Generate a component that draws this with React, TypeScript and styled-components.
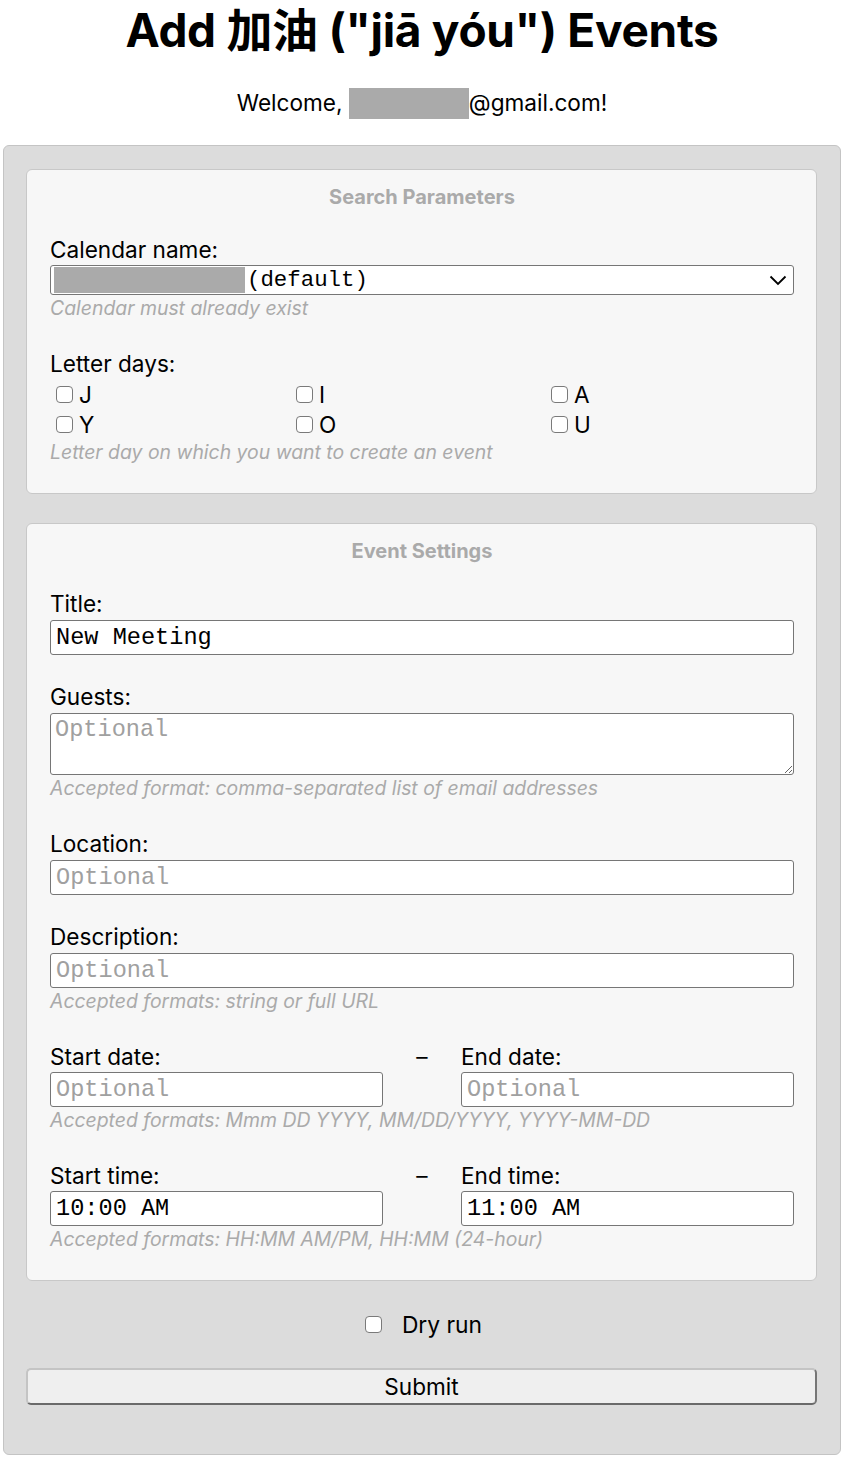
import React from "react";
import styled, { createGlobalStyle } from "styled-components";

const Global = createGlobalStyle`
  html, body { margin: 0; padding: 0; background: #ffffff; }
  body { font-family: Inter, "Noto Sans", "Noto Sans CJK SC", sans-serif; color: #000; }
  * { box-sizing: border-box; }
`;

const Page = styled.div`
  width: 846px;
  padding: 0 5px 4px 3px;
`;

const Title = styled.h1`
  margin: 0;
  padding-top: 4px;
  text-align: center;
  font-size: 46px;
  line-height: 52px;
  font-weight: 700;
  font-family: Inter, "Noto Sans CJK SC", sans-serif;
  letter-spacing: -0.3px;
`;

const Welcome = styled.p`
  margin: 31px 0 26px;
  text-align: center;
  font-size: 22.6px;
  line-height: 32px;
  display: flex;
  justify-content: center;
  align-items: center;
`;

const Redact = styled.span<{ $w: number; $h: number }>`
  display: inline-block;
  width: ${(p) => p.$w}px;
  height: ${(p) => p.$h}px;
  background: #aaaaaa;
`;

const Panel = styled.form`
  background: #dcdcdc;
  border: 1px solid #c4c4c4;
  border-radius: 6px;
  padding: 23px 23px 49px 22px;
  display: flex;
  flex-direction: column;
`;

const Section = styled.div<{ $mb: number }>`
  background: #f7f7f7;
  border: 1px solid #c8c8c8;
  border-radius: 6px;
  padding: 16px 22px 27px 23px;
  margin-bottom: ${(p) => p.$mb}px;
`;

const Legend = styled.div`
  text-align: center;
  font-size: 20px;
  line-height: 22px;
  font-weight: 700;
  color: #aaaaaa;
  margin-bottom: 29px;
`;

const Field = styled.div<{ $last?: boolean }>`
  display: flex;
  flex-direction: column;
  margin-bottom: ${(p) => (p.$last ? 0 : 29)}px;
`;

const Label = styled.label<{ $mb?: number }>`
  font-size: 22.6px;
  line-height: 26px;
  margin-bottom: ${(p) => (p.$mb ?? 3)}px;
`;

const Hint = styled.div`
  font-size: 19.4px;
  line-height: 22px;
  font-style: italic;
  color: #aaaaaa;
  margin-top: 2px;
  padding-bottom: 3px;
`;

const mono = `"Liberation Mono", "Courier New", monospace`;

const TextInput = styled.input`
  height: 35px;
  width: 100%;
  border: 1px solid #767676;
  border-radius: 3px;
  background: #fff;
  padding: 0 5px;
  font-family: ${mono};
  font-size: 23.6px;
  color: #000;
  &::placeholder { color: #a0a0a0; }
`;

const TextArea = styled.textarea`
  height: 62px;
  width: 100%;
  border: 1px solid #767676;
  border-radius: 3px;
  background: #fff;
  padding: 2px 4px;
  font-family: ${mono};
  font-size: 23.6px;
  resize: vertical;
  &::placeholder { color: #a0a0a0; }
`;

const SelectBox = styled.div`
  height: 30px;
  width: 100%;
  border: 1px solid #767676;
  border-radius: 3px;
  background: #fff;
  display: flex;
  align-items: center;
  padding: 0 6px 0 3px;
  margin-top: -1px;
  font-family: ${mono};
  font-size: 22.4px;
`;

const SelectText = styled.span`
  flex: 1;
  display: flex;
  align-items: center;
  gap: 2px;
`;

const Checks = styled.div`
  display: grid;
  grid-template-columns: 240px 255px 1fr;
  padding-left: 6px;
`;

const CheckItem = styled.label`
  display: flex;
  align-items: center;
  height: 30px;
  font-size: 22.6px;
  gap: 6px;
`;

const Box = styled.input.attrs({ type: "checkbox" })`
  appearance: none;
  margin: 0;
  width: 17px;
  height: 17px;
  border: 1px solid #7a7a7a;
  border-radius: 4px;
  background: #fff;
`;

const Pair = styled.div`
  display: grid;
  grid-template-columns: 1fr 78px 1fr;
`;

const Dash = styled.div`
  font-size: 22.6px;
  line-height: 26px;
  text-align: center;
`;

const DryRow = styled.label`
  display: flex;
  justify-content: center;
  align-items: center;
  gap: 20px;
  font-size: 22.8px;
  height: 32px;
  margin: 27px 0 28px;
  padding-left: 4px;
`;

const Submit = styled.button`
  height: 37px;
  width: 100%;
  background: #efefef;
  border: 2px solid;
  border-color: #c4c4c4 #767676 #6a6a6a #c4c4c4;
  border-radius: 5px;
  font-family: Inter, sans-serif;
  font-size: 22.6px;
  color: #000;
  padding: 0;
`;

const Chevron = () => (
  <svg width="18" height="11" viewBox="0 0 18 11">
    <path d="M1.5 1.5 L9 9 L16.5 1.5" fill="none" stroke="#000" strokeWidth="1.8" />
  </svg>
);

export default function App() {
  const letters = ["J", "I", "A", "Y", "O", "U"];
  return (
    <Page>
      <Global />
      <Title>Add 加油 ("jiā yóu") Events</Title>
      <Welcome>
        Welcome,&nbsp;<Redact $w={120} $h={31} />@gmail.com!
      </Welcome>
      <Panel onSubmit={(e) => e.preventDefault()}>
        <Section $mb={29}>
          <Legend>Search Parameters</Legend>
          <Field>
            <Label>Calendar name:</Label>
            <SelectBox>
              <SelectText>
                <Redact $w={191} $h={26} />
                (default)
              </SelectText>
              <Chevron />
            </SelectBox>
            <Hint>Calendar must already exist</Hint>
          </Field>
          <Field $last>
            <Label $mb={2}>Letter days:</Label>
            <Checks>
              {letters.map((l) => (
                <CheckItem key={l}>
                  <Box />
                  {l}
                </CheckItem>
              ))}
            </Checks>
            <Hint>Letter day on which you want to create an event</Hint>
          </Field>
        </Section>
        <Section $mb={0}>
          <Legend>Event Settings</Legend>
          <Field>
            <Label>Title:</Label>
            <TextInput defaultValue="New Meeting" />
          </Field>
          <Field>
            <Label>Guests:</Label>
            <TextArea placeholder="Optional" />
            <Hint>Accepted format: comma-separated list of email addresses</Hint>
          </Field>
          <Field>
            <Label>Location:</Label>
            <TextInput placeholder="Optional" />
          </Field>
          <Field>
            <Label>Description:</Label>
            <TextInput placeholder="Optional" />
            <Hint>Accepted formats: string or full URL</Hint>
          </Field>
          <Field>
            <Pair>
              <Label $mb={2}>Start date:</Label>
              <Dash>–</Dash>
              <Label $mb={2}>End date:</Label>
              <TextInput placeholder="Optional" />
              <div />
              <TextInput placeholder="Optional" />
            </Pair>
            <Hint>Accepted formats: Mmm DD YYYY, MM/DD/YYYY, YYYY-MM-DD</Hint>
          </Field>
          <Field $last>
            <Pair>
              <Label $mb={2}>Start time:</Label>
              <Dash>–</Dash>
              <Label $mb={2}>End time:</Label>
              <TextInput defaultValue="10:00 AM" />
              <div />
              <TextInput defaultValue="11:00 AM" />
            </Pair>
            <Hint>Accepted formats: HH:MM AM/PM, HH:MM (24-hour)</Hint>
          </Field>
        </Section>
        <DryRow>
          <Box />
          Dry run
        </DryRow>
        <Submit type="submit">Submit</Submit>
      </Panel>
    </Page>
  );
}
